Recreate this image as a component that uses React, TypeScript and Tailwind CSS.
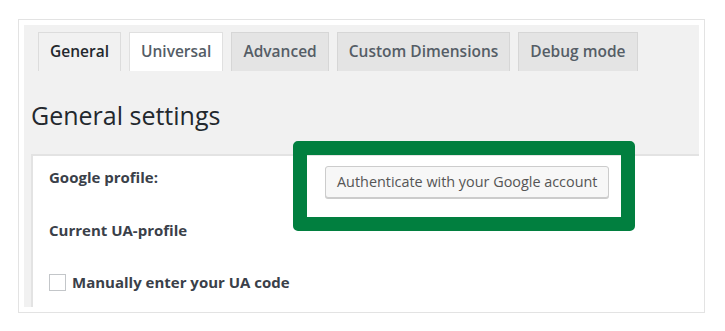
const tabs = [
  { label: 'General', kind: 'active' },
  { label: 'Universal', kind: 'white' },
  { label: 'Advanced', kind: 'gray' },
  { label: 'Custom Dimensions', kind: 'gray' },
  { label: 'Debug mode', kind: 'gray' },
];

export default function App() {
  return (
    <div className="w-[725px] h-[331px] bg-white pt-[19px] pl-[18px] font-['Open_Sans',sans-serif]">
      {/* Frame */}
      <div className="w-[687px] h-[294px] border border-[#e3e3e3] p-[5px]">
        <div className="relative h-full bg-[#f1f1f1] overflow-hidden pl-[7px]">
          {/* Tabs */}
          <div className="flex gap-[8px] pl-[7px] pt-[7px]">
            {tabs.map((tab) => (
              <div
                key={tab.label}
                className={`h-[39px] px-[11px] flex items-center border border-b-0 text-[15.5px] font-semibold ${
                  tab.kind === 'active'
                    ? 'bg-[#f1f1f1] border-[#dcdcdc] text-[#23282d]'
                    : tab.kind === 'white'
                    ? 'bg-white border-[#e0e0e0] text-[#555d66]'
                    : 'bg-[#e4e4e4] border-[#d6d6d6] text-[#555d66]'
                }`}
              >
                {tab.label}
              </div>
            ))}
          </div>

          {/* Heading */}
          <h1 className="mt-[29px] text-[25px] leading-[30px] font-normal text-[#23282d]">
            General settings
          </h1>

          {/* Settings panel */}
          <div className="mt-[24px] h-[200px] bg-white border-t-2 border-l-2 border-[#e3e3e3] pl-[16px] pt-[10px]">
            <div className="flex items-start">
              <div className="w-[276px] pt-[1px] text-[15px] leading-[20px] font-bold text-[#3a4049]">
                Google profile:
              </div>
              <button className="h-[32px] px-[11px] rounded-[3px] border border-[#cccccc] bg-[#f7f7f7] shadow-[0_1px_0_#cccccc] text-[14.4px] text-[#555555]">
                Authenticate with your Google account
              </button>
            </div>
            <div className="mt-[22px] text-[15px] leading-[20px] font-bold text-[#3a4049]">
              Current UA-profile
            </div>
            <label className="mt-[32px] flex items-center gap-[6px] text-[15px] leading-[20px] font-bold text-[#3a4049]">
              <span className="w-[17px] h-[17px] border border-[#c3c6c9] bg-white" />
              Manually enter your UA code
            </label>
          </div>

          {/* Highlight annotation */}
          <div className="absolute left-[269px] top-[116px] w-[342px] h-[90px] border-[14px] border-[#017f3f] rounded-[5px]" />
        </div>
      </div>
    </div>
  );
}
